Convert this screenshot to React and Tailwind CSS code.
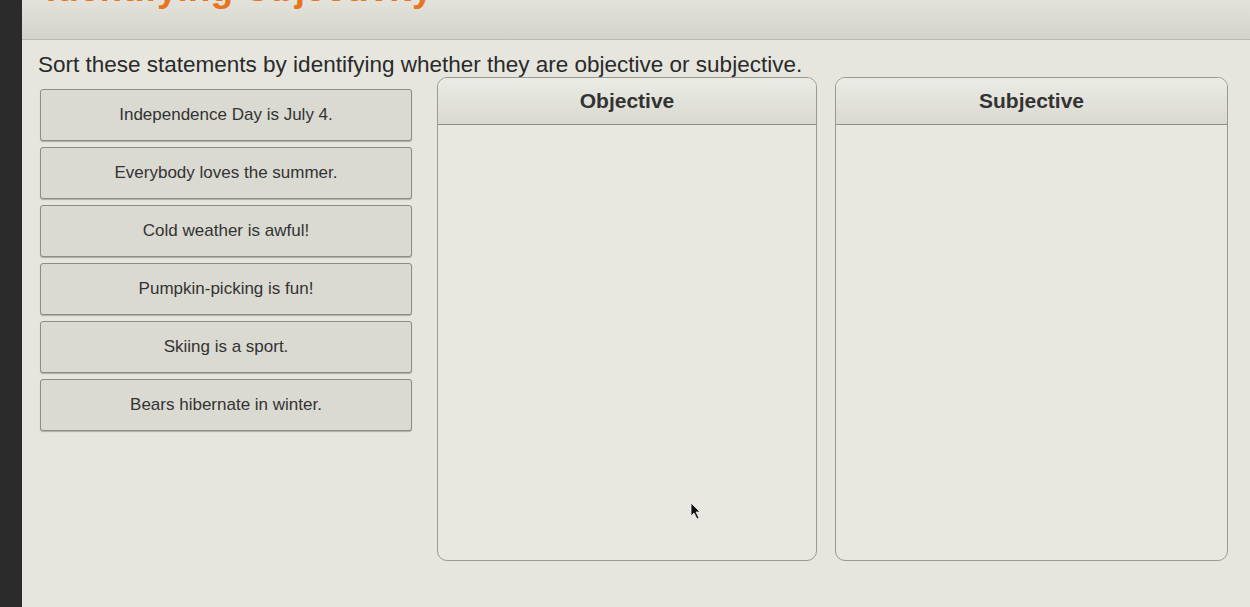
import React from "react"

const statements = [
  "Independence Day is July 4.",
  "Everybody loves the summer.",
  "Cold weather is awful!",
  "Pumpkin-picking is fun!",
  "Skiing is a sport.",
  "Bears hibernate in winter.",
]

function DropBox({ title, className }) {
  return (
    <div className={"flex flex-col rounded-[10px] border border-[#9a9a94] bg-[#e8e8e1] overflow-hidden " + className}>
      <div className="h-[47px] shrink-0 flex items-center justify-center border-b border-[#8f8f89] bg-gradient-to-b from-[#ececE6] to-[#d9d9d2]">
        <span className="text-[21px] font-bold text-[#333]">{title}</span>
      </div>
      <div className="flex-1" />
    </div>
  )
}

export default function App() {
  return (
    <div
      className="relative flex w-[1250px] h-[607px] overflow-hidden bg-[#e6e6df]"
      style={{ fontFamily: '"Liberation Sans", Arial, sans-serif' }}
    >
      {/* dark edge of the monitor */}
      <div className="w-[22px] shrink-0 bg-[#2b2b2b]" />

      <div className="flex-1 flex flex-col">
        {/* header band with clipped title */}
        <div className="h-[40px] shrink-0 overflow-hidden border-b border-[#b9b9b2] bg-gradient-to-b from-[#e3e3dc] to-[#d3d3cc]">
          <div className="pl-[24px] -mt-[30px] text-[37px] leading-[38px] font-bold text-[#e8741e]">
            Identifying Objectivity
          </div>
        </div>

        <div className="pl-[16px] pt-[11px]">
          <p className="text-[22.5px] leading-[28px] text-[#2a2a2a]">
            Sort these statements by identifying whether they are objective or subjective.
          </p>
        </div>

        <div className="flex pl-[18px] mt-[-2px]">
          <div className="w-[372px] pt-[12px] flex flex-col gap-[6px]">
            {statements.map((s) => (
              <div
                key={s}
                className="h-[52px] flex items-center justify-center rounded-[3px] border border-[#8d8d88] bg-[#dadad2] shadow-[0_1px_1px_rgba(0,0,0,0.25)]"
              >
                <span className="text-[17px] text-[#333]">{s}</span>
              </div>
            ))}
          </div>

          <DropBox title="Objective" className="ml-[25px] w-[380px] h-[484px]" />
          <DropBox title="Subjective" className="ml-[18px] w-[393px] h-[484px]" />
        </div>
      </div>

      {/* mouse pointer */}
      <svg className="absolute left-[690px] top-[502px]" width="12" height="18" viewBox="0 0 12 18">
        <path d="M1 1 L1 14 L4 11 L7 17 L9 16 L6 10 L10 10 Z" fill="#111" stroke="#eee" strokeWidth="0.8" />
      </svg>
    </div>
  )
}
